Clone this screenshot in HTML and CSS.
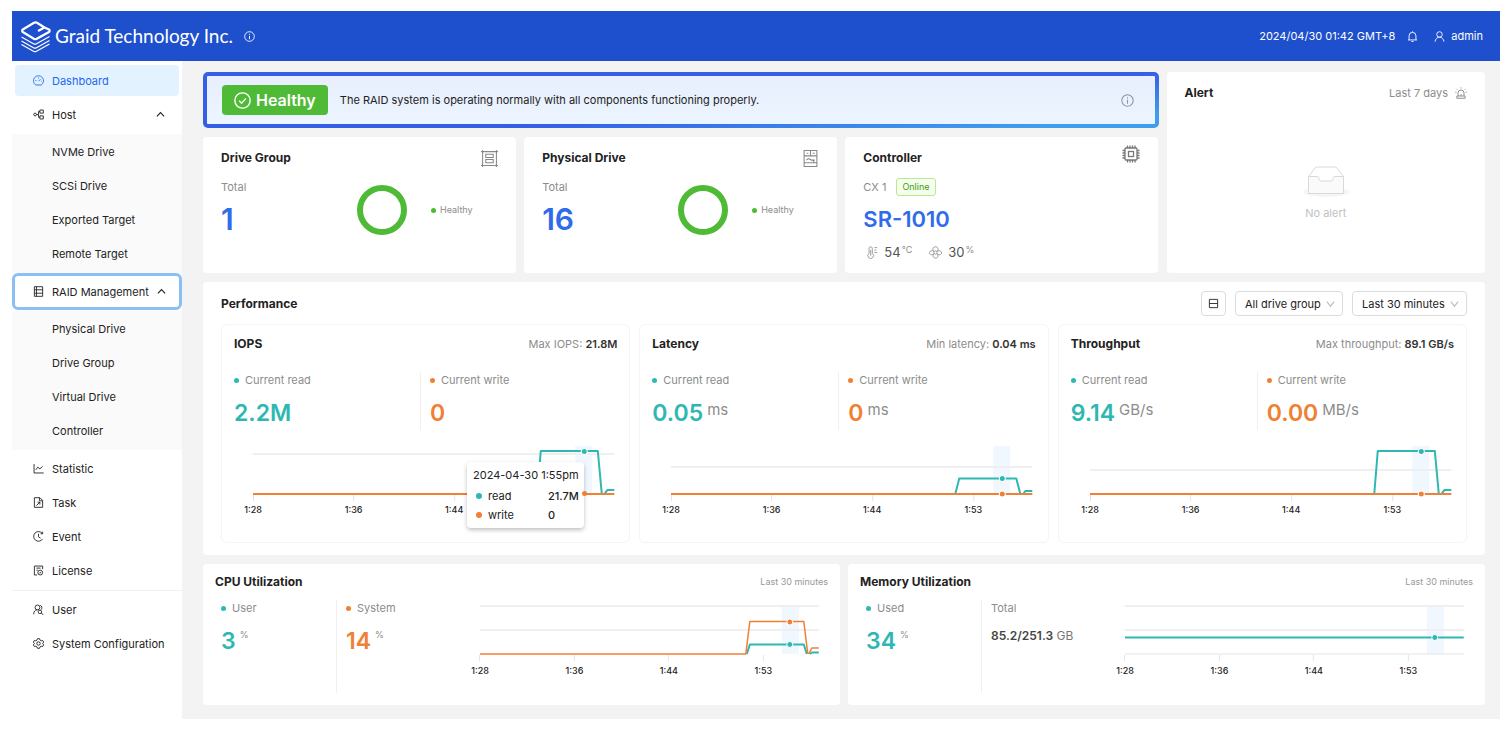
FILE: index.html
```html
<!DOCTYPE html>
<html lang="en">
<head>
    <meta charset="UTF-8">
    <meta name="viewport" content="width=device-width, initial-scale=1.0">
    <title>Graid Technology Inc. - Dashboard</title>
    <link rel="stylesheet" href="styles.css">
</head>
<body>
<div class="app">
    <header class="topbar">
        <svg class="logo" viewBox="0 0 32 34" aria-hidden="true">
            <path d="M18 12l6.5-3.500-7.500-4.800a3 3 0 0 0-3 0L2.800 10.500a1.500 1.500 0 0 0 0 2.500l11 6.700a3 3 0 0 0 3 0L29 13a1.500 1.500 0 0 0 0-2.500l-4.500-2" class="logo-top"/>
            <path d="M1.5 18l12 6.700a3 3 0 0 0 3 0l13-7.200M1.500 22l12 6.700a3 3 0 0 0 3 0l13-7.200M1.500 25.500l12 6.700a3 3 0 0 0 3 0l13-7.200" class="logo-layers"/>
        </svg>
        <span class="brand">Graid Technology Inc.</span>
        <svg class="icon info" viewBox="0 0 16 16"><circle cx="8" cy="8" r="7"/><path d="M8 7v5M8 4v1.500"/></svg>
        <span class="time">2024/04/30 01:42 GMT+8</span>
        <svg class="icon bell" viewBox="0 0 16 16"><path d="M3 13V7a5 5 0 0 1 10 0v6M1.500 13h13M6.500 15.300h3M8 2V.5"/></svg>
        <a class="account" href="#">
            <svg class="icon" viewBox="0 0 16 16"><circle cx="8" cy="5" r="4"/><path d="M1.500 15.500c.5-4 3-6.500 6.500-6.500s6 2.500 6.500 6.500"/></svg>
            admin
        </a>
    </header>

    <div class="body">
        <nav class="sidebar">
            <a class="item active" href="#">
                <svg class="icon" viewBox="0 0 16 16"><path d="M4 14.500a7.300 7.300 0 1 1 8 0zM8 9l3-3M3.500 8h1.500M8 3.500V5M11.500 9h1"/></svg>
                Dashboard
            </a>
            <button class="item" type="button">
                <svg class="icon" viewBox="0 0 16 16"><circle cx="3" cy="8" r="2"/><path d="M5 8h3M8 8V3.500h2M8 8v4h2M10 1.500h5v4.500h-5zM10 10h5v4.500h-5z"/></svg>
                Host
                <svg class="icon caret" viewBox="0 0 10 10"><path d="M1 7l4-4 4 4"/></svg>
            </button>
            <div class="submenu">
                <a class="item" href="#">NVMe Drive</a>
                <a class="item" href="#">SCSi Drive</a>
                <a class="item" href="#">Exported Target</a>
                <a class="item" href="#">Remote Target</a>
            </div>
            <button class="item focused" type="button">
                <svg class="icon" viewBox="0 0 16 16"><path d="M2 1h12v14H2zM2 5.500h12M2 10.500h12M5 1v14"/></svg>
                RAID Management
                <svg class="icon caret" viewBox="0 0 10 10"><path d="M1 7l4-4 4 4"/></svg>
            </button>
            <div class="submenu after-focus">
                <a class="item" href="#">Physical Drive</a>
                <a class="item" href="#">Drive Group</a>
                <a class="item" href="#">Virtual Drive</a>
                <a class="item" href="#">Controller</a>
            </div>
            <a class="item" href="#">
                <svg class="icon" viewBox="0 0 16 16"><path d="M1.500 1.500v13h14M4 10l3-4 3 2.500L14 5"/></svg>
                Statistic
            </a>
            <a class="item" href="#">
                <svg class="icon" viewBox="0 0 16 16"><path d="M2 1h8l4 4v10H2zM9.500 1v4.500H14M5 12.500l5-5M10 11V7.500H6.500"/></svg>
                Task
            </a>
            <a class="item" href="#">
                <svg class="icon" viewBox="0 0 16 16"><path d="M13.500 3.500A7 7 0 1 0 14 11.500M8 4v4.500l3 2M14 1v3h-3"/></svg>
                Event
            </a>
            <a class="item" href="#">
                <svg class="icon" viewBox="0 0 16 16"><path d="M14 6V1.500H2v13h4M5 4.500h6M5 7.500h2"/><circle cx="10.500" cy="11" r="3.500"/><path d="M9 11l1 1 2-2"/></svg>
                License
            </a>
            <hr>
            <a class="item" href="#">
                <svg class="icon" viewBox="0 0 16 16"><circle cx="6.500" cy="5" r="3.500"/><path d="M1 15c0-4 2-6.500 5-6.500M10.500 2c3 .5 3 5 1 6.500"/><circle cx="10" cy="11.500" r="2.500"/><path d="M12 13.500l3 2"/></svg>
                User
            </a>
            <a class="item" href="#">
                <svg class="icon" viewBox="0 0 16 16"><path d="M6.500 1h3l.7 2 1.800 1 2.200-.3 1.300 2.300L14 8l1.500 2-1.300 2.300L12 12l-1.800 1-.7 2h-3l-.7-2L4 12l-2.200.3L.5 10 2 8 .5 6l1.300-2.300L4 4l1.800-1z"/><circle cx="8" cy="8" r="2.500"/></svg>
                System Configuration
            </a>
        </nav>

        <main class="main">
            <div class="overview">
                <div class="overview-left">
                    <section class="banner">
                        <span class="status">
                            <svg class="icon" viewBox="0 0 16 16"><circle cx="8" cy="8" r="7.200"/><path d="M4.800 8.200l2.400 2.400 4-4.600"/></svg>
                            Healthy
                        </span>
                        <p>The RAID system is operating normally with all components functioning properly.</p>
                        <svg class="icon banner-info" viewBox="0 0 16 16"><circle cx="8" cy="8" r="7"/><path d="M8 7v5M8 4v1.500"/></svg>
                    </section>
                    <div class="cards">
                        <section class="card">
                            <div class="card-head">
                                <h2>Drive Group</h2>
                                <svg class="icon card-icon" viewBox="0 0 16 16"><path d="M0 1.500h16M0 14.500h16M1.500 0v16M14.500 0v16M4.500 4h7v3h-7zM4.500 9h7v3h-7z"/></svg>
                            </div>
                            <div class="card-body">
                                <div class="count">
                                    <div class="label">Total</div>
                                    <div class="total">1</div>
                                </div>
                                <svg class="donut" viewBox="0 0 62 62"><circle cx="31" cy="31" r="22"/></svg>
                                <span class="legend">Healthy</span>
                            </div>
                        </section>
                        <section class="card">
                            <div class="card-head">
                                <h2>Physical Drive</h2>
                                <svg class="icon card-icon" viewBox="0 0 16 16"><path d="M2 .5h12v15H2zM2 5.500h12M2 12h12M8 .5v5M4.500 3h1.500M10 3h2M4 9.500l2-1.500 3 1.500h3M11 10v2"/></svg>
                            </div>
                            <div class="card-body">
                                <div class="count">
                                    <div class="label">Total</div>
                                    <div class="total">16</div>
                                </div>
                                <svg class="donut" viewBox="0 0 62 62"><circle cx="31" cy="31" r="22"/></svg>
                                <span class="legend">Healthy</span>
                            </div>
                        </section>
                        <section class="card">
                            <div class="card-head">
                                <h2>Controller</h2>
                                <svg class="icon chip" viewBox="0 0 18 18"><rect x="3" y="3" width="12" height="12" rx="1"/><rect x="6.500" y="6.500" width="5" height="5"/><path d="M5.500 3V.5M8 3V.5M10.500 3V.5M13 3V.5M5.500 17.500V15M8 17.500V15M10.500 17.500V15M13 17.500V15M3 5.500H.5M3 8H.5M3 10.500H.5M3 13H.5M17.500 5.500H15M17.500 8H15M17.500 10.500H15M17.500 13H15"/></svg>
                            </div>
                            <div class="controller">
                                <div class="label">CX 1 <span class="tag">Online</span></div>
                                <div class="model">SR-1010</div>
                                <div class="sensors">
                                    <span class="sensor">
                                        <svg class="icon" viewBox="0 0 16 16"><path d="M5 9V3a2 2 0 0 1 4 0v6a3.500 3.500 0 1 1-4 0zM7 5v7M11.500 2H15M11.500 5H14M11.500 8H15"/></svg>
                                        54<sup>°C</sup>
                                    </span>
                                    <span class="sensor">
                                        <svg class="icon" viewBox="0 0 16 16"><circle cx="8" cy="8" r="2"/><path d="M6 6.500C3.500 4 5 1 8 1s4.500 3 2 5.500M10 6.500c3-1.500 5.500 0 5.500 2s-3 3.500-5.500 1M6 6.500c-3-1.500-5.500 0-5.500 2s3 3.500 5.500 1M6 9.500c-2 3-.5 5.500 2 5.500s4-2.500 2-5.500"/></svg>
                                        30<sup>%</sup>
                                    </span>
                                </div>
                            </div>
                        </section>
                    </div>
                </div>
                <section class="card alert">
                    <div class="card-head">
                        <h2>Alert</h2>
                        <span class="range">Last 7 days
                            <svg class="icon" viewBox="0 0 16 16"><path d="M4 12V8a4 4 0 0 1 8 0v4M2.500 12h11v3h-11zM8 2V.5M3 3.500L2 2.500M13 3.500l1-1M2 7H.5M15.500 7H14M8 12V9.500"/></svg>
                        </span>
                    </div>
                    <div class="empty">
                        <svg viewBox="0 0 48 34" aria-hidden="true">
                            <ellipse cx="24" cy="27" rx="23" ry="5" fill="#f5f5f5"/>
                            <path d="M6.500 11.500L14 2h20l7.500 9.500V28h-35z" fill="#fff" stroke="#d9d9d9"/>
                            <path d="M6.500 11.500h9c1 0 1.500 1 1.500 2 0 1.500 1 2.500 2 2.500h10c1 0 2-1 2-2.500 0-1 .5-2 1.500-2h9V28.500h-35z" fill="#fafafa" stroke="#d9d9d9"/>
                        </svg>
                        <p>No alert</p>
                    </div>
                </section>
            </div>

            <section class="card performance">
                <div class="card-head">
                    <h2>Performance</h2>
                    <div class="filters">
                        <button class="layout-btn" type="button" aria-label="Change layout">
                            <svg class="icon" viewBox="0 0 16 16"><path d="M2 2h12v12H2zM2 8h12"/></svg>
                        </button>
                        <span class="select">
                            <select aria-label="Drive group"><option>All drive group</option></select>
                            <svg class="icon" viewBox="0 0 10 10"><path d="M1 3l4 5 4-5"/></svg>
                        </span>
                        <span class="select">
                            <select aria-label="Time range"><option>Last 30 minutes</option></select>
                            <svg class="icon" viewBox="0 0 10 10"><path d="M1 3l4 5 4-5"/></svg>
                        </span>
                    </div>
                </div>

                <div class="panels">
                    <section class="panel">
                        <div class="panel-head">
                            <h3>IOPS</h3>
                            <span class="peak">Max IOPS: <b>21.8M</b></span>
                        </div>
                        <div class="stats">
                            <div class="stat read"><div class="label">Current read</div><div class="value">2.2M</div></div>
                            <div class="stat write"><div class="label">Current write</div><div class="value">0</div></div>
                        </div>
                        <div class="chart">
                            <svg viewBox="0 0 383 76">
                                <rect class="band" x="341" y="4" width="17" height="48"/>
                                <path class="grid" d="M19 12h361"/>
                                <path class="tick" d="M19.500 53v6M119.500 53v6M220.500 53v6"/>
                                <path class="line-read" d="M303 52l3.500-43h57l4 43M370 52l3-4h7"/>
                                <path class="line-write" d="M19 52h361"/>
                                <circle class="dot-read" cx="350" cy="9.500" r="3"/>
                                <g class="axis"><text x="19" y="71">1:28</text><text x="119.500" y="71">1:36</text><text x="220" y="71">1:44</text></g>
                            </svg>
                            <div class="tooltip">
                                <div class="tooltip-title">2024-04-30 1:55pm</div>
                                <div class="tooltip-row read"><span>read</span><b>21.7M</b></div>
                                <div class="tooltip-row write"><span>write</span><b>0</b></div>
                            </div>
                        </div>
                    </section>

                    <section class="panel">
                        <div class="panel-head">
                            <h3>Latency</h3>
                            <span class="peak">Min latency: <b>0.04 ms</b></span>
                        </div>
                        <div class="stats">
                            <div class="stat read"><div class="label">Current read</div><div class="value">0.05<span class="unit">ms</span></div></div>
                            <div class="stat write"><div class="label">Current write</div><div class="value">0<span class="unit">ms</span></div></div>
                        </div>
                        <div class="chart">
                            <svg viewBox="0 0 383 76">
                                <rect class="band" x="341" y="4" width="17" height="48"/>
                                <path class="grid" d="M19 25h361"/>
                                <path class="tick" d="M19.500 53v6M119.500 53v6M220.500 53v6M321.500 53v6"/>
                                <path class="line-read" d="M303 52l4-15.500h57l4 15.500M371 52l2-3h7"/>
                                <path class="line-write" d="M19 52h361"/>
                                <circle class="dot-read" cx="350" cy="36.500" r="3"/>
                                <circle class="dot-write" cx="350" cy="52" r="3"/>
                                <g class="axis"><text x="19" y="71">1:28</text><text x="119.500" y="71">1:36</text><text x="220" y="71">1:44</text><text x="321" y="71">1:53</text></g>
                            </svg>
                        </div>
                    </section>

                    <section class="panel">
                        <div class="panel-head">
                            <h3>Throughput</h3>
                            <span class="peak">Max throughput: <b>89.1 GB/s</b></span>
                        </div>
                        <div class="stats">
                            <div class="stat read"><div class="label">Current read</div><div class="value">9.14<span class="unit">GB/s</span></div></div>
                            <div class="stat write"><div class="label">Current write</div><div class="value">0.00<span class="unit">MB/s</span></div></div>
                        </div>
                        <div class="chart">
                            <svg viewBox="0 0 383 76">
                                <rect class="band" x="341" y="4" width="17" height="48"/>
                                <path class="grid" d="M19 28h361"/>
                                <path class="tick" d="M19.500 53v6M119.500 53v6M220.500 53v6M321.500 53v6"/>
                                <path class="line-read" d="M303 52l3.500-43h57l4 43M370 52l3-4h7"/>
                                <path class="line-write" d="M19 52h361"/>
                                <circle class="dot-read" cx="350" cy="9.500" r="3"/>
                                <circle class="dot-write" cx="350" cy="52" r="3"/>
                                <g class="axis"><text x="19" y="71">1:28</text><text x="119.500" y="71">1:36</text><text x="220" y="71">1:44</text><text x="321" y="71">1:53</text></g>
                            </svg>
                        </div>
                    </section>
                </div>
            </section>

            <div class="usage">
                <section class="card usage-card">
                    <div class="card-head">
                        <h2>CPU Utilization</h2>
                        <span class="small">Last 30 minutes</span>
                    </div>
                    <div class="usage-body">
                        <div class="stat read"><div class="label">User</div><div class="value">3<sup>%</sup></div></div>
                        <div class="stat write"><div class="label">System</div><div class="value">14<sup>%</sup></div></div>
                        <svg viewBox="0 0 368 93">
                            <rect class="band" x="322" y="6" width="17" height="48"/>
                            <path class="grid" d="M20 6h339M20 30h339"/>
                            <path class="tick" d="M19.500 55v6M114.500 55v6M208.500 55v6M303.500 55v6"/>
                            <path class="line-read" d="M287 54l3-9.500h54l3 9.500M350 54l2-1.500h7"/>
                            <path class="line-write thin" d="M20 54h266l4-32.500h54l4 32.500M349 54l3-6h7"/>
                            <circle class="dot-read" cx="330" cy="44.500" r="3"/>
                            <circle class="dot-write" cx="330" cy="22" r="3"/>
                            <g class="axis"><text x="20" y="74">1:28</text><text x="114.500" y="74">1:36</text><text x="209" y="74">1:44</text><text x="303.500" y="74">1:53</text></g>
                        </svg>
                    </div>
                </section>
                <section class="card usage-card">
                    <div class="card-head">
                        <h2>Memory Utilization</h2>
                        <span class="small">Last 30 minutes</span>
                    </div>
                    <div class="usage-body">
                        <div class="stat read"><div class="label">Used</div><div class="value">34<sup>%</sup></div></div>
                        <div class="stat plain"><div class="label">Total</div><div class="memory"><b>85.2/251.3</b> GB</div></div>
                        <svg viewBox="0 0 368 93">
                            <rect class="band" x="322" y="6" width="17" height="48"/>
                            <path class="grid" d="M20 6h339M20 30h339"/>
                            <path class="base" d="M20 54h339"/>
                            <path class="tick" d="M19.500 55v6M114.500 55v6M208.500 55v6M303.500 55v6"/>
                            <path class="line-read" d="M20 37.500h339"/>
                            <circle class="dot-read" cx="330" cy="37.500" r="3"/>
                            <g class="axis"><text x="20" y="74">1:28</text><text x="114.500" y="74">1:36</text><text x="209" y="74">1:44</text><text x="303.500" y="74">1:53</text></g>
                        </svg>
                    </div>
                </section>
            </div>
        </main>
    </div>
</div>
</body>
</html>
```
FILE: styles.css
```css
* {
    box-sizing: border-box;
}

body {
    margin: 0;
    background: #fff;
    color: #222;
    font-family: Inter, "Liberation Sans", sans-serif;
    font-size: 11px;
    line-height: 16px;
}

h2, h3, p {
    margin: 0;
}

h2, h3 {
    font-size: 12px;
    font-weight: 700;
}

h2 {
    line-height: 18px;
}

b {
    font-weight: 600;
}

a {
    color: inherit;
    text-decoration: none;
}

button, select {
    font: inherit;
    color: inherit;
}

svg {
    display: block;
    flex: none;
}

.icon {
    width: 11px;
    height: 11px;
    fill: none;
    stroke: currentColor;
    stroke-width: 1.3;
}

.app {
    display: flex;
    flex-direction: column;
    min-height: calc(100vh - 22px);
    margin: 11px 12px;
}

/* top bar */
.topbar {
    display: flex;
    align-items: center;
    height: 50px;
    padding: 0 17px 0 8px;
    background: #1e4fcc;
    color: #fff;
}

.logo {
    width: 32px;
    height: 34px;
    fill: none;
    stroke: #fff;
}

.logo-top {
    stroke-width: 2.2;
    stroke-linejoin: round;
}

.logo-layers {
    stroke-width: 1.2;
}

.brand {
    margin-left: 3px;
    font-family: Lato, sans-serif;
    font-size: 19px;
    line-height: 24px;
}

.info {
    margin-left: 11px;
}

.time {
    margin-left: auto;
}

.bell {
    margin-left: 12px;
}

.account {
    display: flex;
    align-items: center;
    gap: 6px;
    margin-left: 16px;
}

.body {
    display: flex;
    flex: 1;
}

/* sidebar */
.sidebar {
    flex: none;
    width: 170px;
    padding-top: 4px;
}

.item {
    display: flex;
    align-items: center;
    gap: 8px;
    height: 31px;
    margin: 0 3px 3px;
    padding: 0 14px 0 18px;
    border: 0;
    border-radius: 4px;
    background: none;
    white-space: nowrap;
}

button.item {
    width: calc(100% - 6px);
    text-align: left;
}

.item.active {
    background: #e3f2ff;
    color: #2468f2;
}

.item .caret {
    width: 9px;
    height: 9px;
    margin-left: auto;
}

button.item.focused {
    width: 100%;
    height: 37px;
    margin: 0 0 1px;
    border: 3px solid #8cc0f5;
    border-radius: 6px;
    background: #fff;
}

.submenu {
    margin-top: 4px;
    padding: 2px 0 1px;
    background: #fafafa;
}

.submenu.after-focus {
    margin: 0 0 3px;
}

.submenu .item {
    padding-left: 37px;
}

.sidebar hr {
    margin: 4px 0 3px;
    border: 0;
    border-top: 1px solid #f0f0f0;
}

/* content */
.main {
    display: flex;
    flex-direction: column;
    flex: 1;
    gap: 9px;
    min-width: 0;
    padding: 11px 15px 14px 21px;
    background: #f3f3f3;
}

.overview {
    display: grid;
    grid-template-columns: 3fr 1fr;
    gap: 8px;
}

.banner {
    display: flex;
    align-items: center;
    gap: 12px;
    height: 56px;
    padding: 0 21px 0 15px;
    border: 4px solid transparent;
    border-radius: 5px;
    background: linear-gradient(#e8eefd, #ebf5ff) padding-box, linear-gradient(175deg, #3560e6 60%, #409cec 90%) border-box;
}

.status {
    display: flex;
    align-items: center;
    gap: 5px;
    height: 30px;
    padding: 0 12px;
    border-radius: 4px;
    background: #4fba35;
    color: #fff;
    font-size: 16px;
    font-weight: 600;
}

.status .icon {
    width: 17px;
    height: 17px;
}

.banner-info {
    width: 13px;
    height: 13px;
    margin-left: auto;
    color: #8a94a8;
}

.cards {
    display: grid;
    grid-template-columns: repeat(3, 1fr);
    gap: 8px;
    margin-top: 9px;
}

.card {
    padding: 12px 18px 13px;
    border-radius: 4px;
    background: #fff;
}

.card-head {
    display: flex;
    align-items: center;
    justify-content: space-between;
    height: 18px;
}

.card-icon {
    width: 17px;
    height: 17px;
    color: #888;
    stroke-width: 1;
}

.chip {
    width: 18px;
    height: 18px;
    margin-bottom: 8px;
    color: #777;
}

.card-body {
    display: flex;
    align-items: center;
    margin-top: 12px;
}

.count {
    flex: 0 0 130px;
    align-self: flex-start;
}

.label, .range, .peak {
    color: #8c8c8c;
}

.total, .model {
    margin-top: 8px;
    color: #2f6bea;
    font-size: 22px;
    font-weight: 600;
    line-height: 32px;
}

.total {
    font-size: 30px;
}

.donut {
    width: 62px;
    height: 62px;
    fill: none;
    stroke: #4fba35;
    stroke-width: 6;
}

.legend {
    display: flex;
    align-items: center;
    gap: 4px;
    margin-left: 18px;
    color: #8c8c8c;
    font-size: 9px;
}

.legend::before {
    content: "";
    width: 5px;
    height: 5px;
    border-radius: 50%;
    background: #4fba35;
}

.controller {
    margin-top: 12px;
}

.controller .label {
    display: flex;
    align-items: center;
    gap: 10px;
}

.tag {
    margin: -1px 0;
    padding: 0 5px;
    border: 1px solid #b7eb8f;
    border-radius: 3px;
    background: #f6ffed;
    color: #389e0d;
    font-size: 9px;
}

.sensors {
    display: flex;
    gap: 15px;
    margin-top: 9px;
    color: #555;
    font-size: 13px;
}

.sensor {
    display: flex;
    align-items: center;
}

.sensor .icon {
    width: 13px;
    height: 13px;
    margin: 0 6px 0 2px;
    color: #888;
    stroke-width: 1;
}

sup {
    align-self: flex-start;
    margin-left: 1px;
    color: #8c8c8c;
    font-size: 9px;
    font-weight: 400;
    line-height: 12px;
}

.alert {
    display: flex;
    flex-direction: column;
}

.range {
    display: flex;
    align-items: center;
    gap: 7px;
}

.range .icon {
    width: 12px;
    height: 12px;
}

.empty {
    display: flex;
    flex: 1;
    flex-direction: column;
    align-items: center;
    justify-content: center;
    gap: 6px;
    padding-top: 24px;
    color: #bfbfbf;
}

.empty svg {
    width: 48px;
    height: 34px;
}

/* performance */
.performance {
    padding: 9px 18px 12px;
}

.performance .card-head {
    height: 25px;
}

.filters {
    display: flex;
    gap: 9px;
}

.layout-btn, .select select {
    height: 25px;
    border: 1px solid #dcdcdc;
    border-radius: 4px;
    background: #fff;
}

.layout-btn {
    display: grid;
    place-items: center;
    width: 25px;
    padding: 0;
}

.select {
    position: relative;
}

.select select {
    appearance: none;
    padding: 0 21px 0 9px;
}

.select .icon {
    position: absolute;
    top: 8px;
    right: 8px;
    width: 9px;
    height: 9px;
    color: #bfbfbf;
    pointer-events: none;
}

.panels {
    display: grid;
    grid-template-columns: repeat(3, 1fr);
    gap: 9px;
    margin-top: 8px;
}

.panel {
    padding: 11px 12px 24px;
    border: 1px solid #f5f5f5;
    border-radius: 6px;
}

.panel-head {
    display: flex;
    justify-content: space-between;
}

.peak b {
    color: #333;
}

.stats {
    display: grid;
    grid-template-columns: 186px 1fr;
    height: 58px;
    margin-top: 20px;
}

.stat + .stat {
    padding-left: 9px;
    border-left: 1px solid #f0f0f0;
}

.stat .label {
    display: flex;
    align-items: center;
    gap: 6px;
}

.stat .label::before {
    content: "";
    width: 5px;
    height: 5px;
    border-radius: 50%;
    background: #2fb8b3;
}

.stat.write .label::before {
    background: #f08033;
}

.stat.plain .label::before {
    display: none;
}

.value {
    display: flex;
    margin-top: 9px;
    color: #2fb8b3;
    font-size: 23px;
    font-weight: 600;
    line-height: 32px;
}

.write .value {
    color: #f08033;
}

.unit {
    margin-left: 4px;
    color: #8c8c8c;
    font-size: 15px;
    font-weight: 400;
    line-height: 26px;
}

.value sup {
    margin-left: 4px;
    line-height: 20px;
}

.chart {
    position: relative;
    margin-top: 12px;
}

.chart svg {
    width: 100%;
}

.band {
    fill: #f1f7fe;
}

.grid, .tick, .base {
    fill: none;
    stroke: #efeff1;
    stroke-width: 2;
}

.tick, .base {
    stroke: #e4e4e8;
    stroke-width: 1;
}

.line-read, .line-write {
    fill: none;
    stroke: #2fb8b3;
    stroke-width: 2;
    stroke-linejoin: round;
}

.line-write {
    stroke: #f08033;
}

.line-write.thin {
    stroke-width: 1.5;
}

.dot-read, .dot-write {
    fill: #2fb8b3;
    stroke: #fff;
}

.dot-write {
    fill: #f08033;
}

.axis {
    fill: #222;
    font-size: 9px;
    font-weight: 500;
    text-anchor: middle;
}

.tooltip {
    position: absolute;
    top: 20px;
    left: 233px;
    width: 117px;
    padding: 5px 6px 3px;
    border-radius: 4px;
    background: #fff;
    box-shadow: 0 2px 4px rgba(0, 0, 0, 0.25);
    white-space: nowrap;
}

/* marker of the hovered point, sits on the tooltip edge */
.tooltip::after {
    content: "";
    position: absolute;
    top: 29px;
    right: -3px;
    width: 5px;
    height: 5px;
    border-radius: 50%;
    background: #f08033;
}

.tooltip-title {
    margin-bottom: 3px;
    line-height: 17px;
}

.tooltip-row {
    display: grid;
    grid-template-columns: 75px 1fr;
    line-height: 19px;
}

.tooltip-row b {
    font-weight: 500;
}

.tooltip-row span::before {
    content: "";
    display: inline-block;
    width: 6px;
    height: 6px;
    margin: 0 6px 1px 3px;
    border-radius: 50%;
    background: #2fb8b3;
}

.tooltip-row.write span::before {
    background: #f08033;
}

/* cpu and memory */
.usage {
    display: grid;
    grid-template-columns: 1fr 1fr;
    gap: 8px;
}

.usage-card {
    padding: 9px 12px 12px;
}

.small {
    color: #999;
    font-size: 9px;
}

.usage-body {
    display: grid;
    grid-template-columns: 121px 1fr 60%;
    margin-top: 9px;
}

.usage-body svg {
    width: 100%;
}

.usage-body .stat:first-child {
    padding-left: 6px;
}

.memory {
    margin-top: 12px;
    color: #777;
    font-size: 12px;
}

.memory b {
    color: #444;
}
```
